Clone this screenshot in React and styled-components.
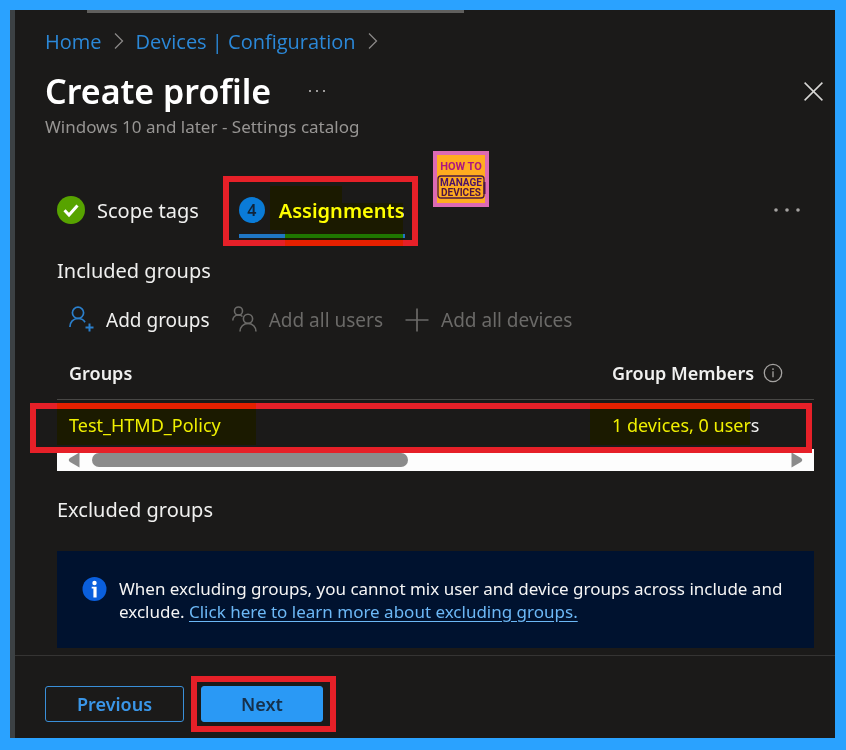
import React from "react";
import styled, { createGlobalStyle, css } from "styled-components";

const GlobalStyle = createGlobalStyle`
  *, *::before, *::after { box-sizing: border-box; }
  body { margin: 0; background: #2aa2ff; }
  button, a, table { font: inherit; color: inherit; }
  button { background: none; border: 0; padding: 0; margin: 0; cursor: pointer; }
  h1, h2, p { margin: 0; }
`;

const Frame = styled.div`
  min-height: 100vh;
  padding: 10px 11px 12px 10px;
  display: flex;
  background: #2aa2ff;
  font-family: "Noto Sans", "Open Sans", sans-serif;
  font-size: 18px;
  color: #f0f0ef;
`;

const Panel = styled.div`
  flex: 1;
  min-width: 0;
  display: flex;
  flex-direction: column;
  background: #1b1a19;
  border-left: 5px solid #3c4144;
`;

const LoadingBar = styled.div`
  height: 3px;
  width: 46%;
  margin-left: 72px;
  background: #605f5d;
`;

const Header = styled.header`
  padding: 14px 12px 0 30px;
`;

const Breadcrumb = styled.nav`
  display: flex;
  align-items: center;
  gap: 12px;
  height: 28px;
  font-family: "Open Sans", "Noto Sans", sans-serif;
  font-size: 20px;
  color: #2b88d8;
  a { text-decoration: none; }
`;

const TitleRow = styled.div`
  display: flex;
  align-items: center;
  height: 44px;
  margin-top: 14px;
`;

const Title = styled.h1`
  font-size: 34px;
  line-height: 44px;
  font-weight: 600;
  color: #fff;
`;

const IconButton = styled.button`
  display: flex;
  color: #d8d7d5;
  margin-left: ${(p) => (p.$push ? "auto" : "36px")};
`;

const Subtitle = styled.p`
  margin-top: 2px;
  font-size: 17px;
  line-height: 24px;
  color: #979593;
`;

const Content = styled.main`
  padding: 0 21px 0 42px;
`;

const Steps = styled.div`
  display: flex;
  align-items: center;
  gap: 40px;
  margin-top: 43px;
`;

const Step = styled.button`
  position: relative;
  display: flex;
  align-items: center;
  gap: ${(p) => (p.$active ? "14px" : "12px")};
  height: 56px;
  font-size: 20px;
  font-weight: ${(p) => (p.$active ? 600 : 400)};
  color: ${(p) => (p.$active ? "#fff" : "#f0f0ef")};
  ${(p) =>
    p.$active &&
    css`
      box-shadow: inset 0 -4px #1f76c4;
    `}
`;

const StepNumber = styled.span`
  width: 26px;
  height: 26px;
  border-radius: 50%;
  background: #0a7bd8;
  color: #10243a;
  font-size: 16px;
  line-height: 26px;
  text-align: center;
`;

const outlineAreas = {
  step: "inset: -6px -13px -8px -16px;",
  row: "inset: 2px 2px -4px -27px;",
  button: "inset: -11px -14px -11px -11px;",
};

const RedOutline = styled.span`
  position: absolute;
  z-index: 2;
  pointer-events: none;
  border: 6px solid #e62028;
  ${(p) => outlineAreas[p.$area]}
`;

const markerAreas = {
  stepTop: "left: 31px; width: 72px; top: 4px; height: 17px;",
  step: "left: 31px; right: 2px; top: 21px; bottom: 8px;",
  stepLine: "left: 46px; right: 2px; bottom: -8px; height: 16px;",
  group: "left: 0; width: 199px; top: 2px; bottom: 4px;",
  members: "right: 64px; width: 160px; top: 2px; bottom: 4px;",
};

const Marker = styled.span`
  position: absolute;
  z-index: 3;
  pointer-events: none;
  background: #ff0;
  mix-blend-mode: multiply;
  ${(p) => markerAreas[p.$area]}
`;

const StepSlot = styled.div`
  position: relative;
`;

const LogoBadge = styled.span`
  position: absolute;
  left: 194px;
  top: -31px;
  width: 56px;
  height: 56px;
  svg { display: block; }
`;

const SectionTitle = styled.h2`
  margin-top: ${(p) => (p.$later ? "25px" : "19px")};
  font-size: 20px;
  line-height: 28px;
  font-weight: 400;
`;

const Toolbar = styled.div`
  display: flex;
  align-items: center;
  gap: 22px;
  height: 36px;
  margin: 17px 0 0 12px;
`;

const Command = styled.button`
  display: flex;
  align-items: center;
  gap: 12px;
  font-size: 19px;
  color: #f0f0ef;
  &:disabled { color: #6b6a68; cursor: default; }
  svg { flex: none; }
`;

const TableWrap = styled.div`
  position: relative;
  margin-top: 8px;
`;

const GroupTable = styled.table`
  width: 100%;
  border-collapse: separate;
  border-spacing: 0;
  table-layout: fixed;
  text-align: left;
  th {
    height: 54px;
    padding: 0 12px;
    border-bottom: 1px solid #484745;
    font-weight: 600;
    white-space: nowrap;
  }
  th:last-child { width: 214px; }
  td { height: 49px; padding: 0 12px; white-space: nowrap; }
`;

const HeadLabel = styled.span`
  display: flex;
  align-items: center;
  gap: 9px;
`;

const RowOverlay = styled.div`
  position: absolute;
  inset: 55px 0 0 0;
  pointer-events: none;
`;

const ScrollBar = styled.div`
  display: flex;
  align-items: center;
  gap: 12px;
  height: 22px;
  padding: 0 11px;
  background: #fdfdfd;
  button { display: flex; }
`;

const ScrollTrack = styled.div`
  flex: 1;
  height: 14px;
`;

const ScrollThumb = styled.div`
  width: 46%;
  height: 14px;
  border-radius: 7px;
  background: #8b8b8b;
`;

const Notice = styled.div`
  display: flex;
  gap: 12px;
  margin-top: 27px;
  padding: 26px 24px 25px 25px;
  background: #00122f;
  line-height: 23px;
  font-size: 17px;
  color: #f5f5f5;
  svg { flex: none; }
  a { display: inline-block; color: #6cb8f6; text-underline-offset: 3px; }
`;

const Footer = styled.footer`
  flex: 1;
  display: flex;
  align-items: flex-start;
  gap: 17px;
  margin-top: 7px;
  padding: 30px 30px 16px;
  border-top: 1px solid #353433;
`;

const ActionButton = styled.button`
  position: relative;
  min-width: ${(p) => (p.$primary ? "122px" : "139px")};
  height: 36px;
  line-height: 32px;
  border-radius: 3px;
  border: 1px solid #3a8fd8;
  font-weight: 600;
  color: #3a96e8;
  ${(p) =>
    p.$primary &&
    css`
      background: #2a99f5;
      border-color: #2a99f5;
      color: #16304a;
    `}
`;

const Chevron = () => (
  <svg width="10" height="18" viewBox="0 0 10 18" fill="none" stroke="#8a8886" strokeWidth="1.3" aria-hidden="true">
    <path d="M1 1.5 8.5 9 1 16.5" />
  </svg>
);

const Dots = ({ width, gap, r, color }) => (
  <svg width={width} height="8" viewBox={`0 0 ${width} 8`} fill={color} aria-hidden="true">
    {[-1, 0, 1].map((n) => (
      <circle key={n} cx={width / 2 + n * gap} cy="4" r={r} />
    ))}
  </svg>
);

const CheckIcon = () => (
  <svg width="28" height="28" viewBox="0 0 28 28" aria-hidden="true">
    <circle cx="14" cy="14" r="14" fill="#57a300" />
    <path d="M7.5 14.3 12 19 20.5 9.5" fill="none" stroke="#fff" strokeWidth="3" />
  </svg>
);

const AddUserIcon = () => (
  <svg width="25" height="28" viewBox="0 0 25 28" fill="none" stroke="#2b7fcb" strokeWidth="1.7" aria-hidden="true">
    <circle cx="9" cy="6.8" r="5.6" />
    <path d="M.9 21C.9 15.8 4.3 12.5 9 12.5c3.2 0 5.6 1.3 7 3.7" />
    <path d="M20.5 17.5v8M16.5 21.5h8" strokeWidth="2" />
  </svg>
);

const UsersIcon = () => (
  <svg width="25" height="28" viewBox="0 0 25 28" fill="none" stroke="currentColor" strokeWidth="1.6" aria-hidden="true">
    <circle cx="6.5" cy="5" r="4" />
    <path d="M.8 14.5C.8 11.3 3.2 9 6.5 9c1.6 0 3 .6 4 1.5" />
    <circle cx="16" cy="12.8" r="4.6" />
    <path d="M8 25.5c0-4.7 3.5-8 8-8s8 3.3 8 8" />
  </svg>
);

const PlusIcon = () => (
  <svg width="24" height="24" viewBox="0 0 24 24" fill="none" stroke="currentColor" strokeWidth="1.7" aria-hidden="true">
    <path d="M12 .5v23M.5 12h23" />
  </svg>
);

const InfoOutline = () => (
  <svg width="20" height="20" viewBox="0 0 20 20" fill="none" stroke="#a5a3a1" strokeWidth="1.3" aria-hidden="true">
    <circle cx="10" cy="10" r="8.7" />
    <path d="M10 8.3v6M10 5.3v1.6" />
  </svg>
);

const InfoFilled = () => (
  <svg width="25" height="24" viewBox="0 0 25 24" aria-hidden="true">
    <circle cx="12.5" cy="12" r="12" fill="#0a5fdd" />
    <circle cx="12.5" cy="6" r="2.2" fill="#fff" />
    <path d="M9.7 9.7h4.9v10.9h-3.2v-9.2H9.7z" fill="#fff" />
  </svg>
);

const ArrowIcon = ({ right }) => (
  <svg width="12" height="16" viewBox="0 0 12 16" aria-hidden="true">
    <path
      d={right ? "M.5 .5 10 6Q12.5 8 10 10L.5 15.5Z" : "M11.5 .5 2 6Q-.5 8 2 10L11.5 15.5Z"}
      fill="#8b8b8b"
    />
  </svg>
);

const HowToLogo = () => (
  <svg width="56" height="56" viewBox="0 0 56 56" role="img" aria-label="How to manage devices">
    <rect width="56" height="56" fill="#dc6ab3" />
    <rect x="4" y="4" width="48" height="48" fill="#ffac20" />
    <g fontFamily="Roboto, sans-serif" fontWeight="700" textAnchor="middle">
      <text x="28" y="19" fontSize="11" fill="#ad1781">HOW TO</text>
      <rect x="5" y="25" width="46" height="22" rx="3" fill="none" stroke="#4a1742" strokeWidth="1.3" />
      <text x="28" y="35" fontSize="10" fill="#4b1269">MANAGE</text>
      <text x="28" y="45" fontSize="10" fill="#4b1245">DEVICES</text>
    </g>
    <path d="M51.5 31v12" stroke="#4a1742" strokeWidth="2" />
  </svg>
);

export default function App() {
  return (
    <>
      <GlobalStyle />
      <Frame>
        <Panel>
          <LoadingBar />
          <Header>
            <Breadcrumb aria-label="Breadcrumb">
              <a href="#home">Home</a>
              <Chevron />
              <a href="#devices">Devices | Configuration</a>
              <Chevron />
            </Breadcrumb>
            <TitleRow>
              <Title>Create profile</Title>
              <IconButton aria-label="More options">
                <Dots width={20} gap={7} r={1} color="#c8c6c4" />
              </IconButton>
              <IconButton $push aria-label="Close">
                <svg width="19" height="19" viewBox="0 0 19 19" stroke="currentColor" strokeWidth="1.5" aria-hidden="true">
                  <path d="M.6.6l17.8 17.8M18.4.6.6 18.4" />
                </svg>
              </IconButton>
            </TitleRow>
            <Subtitle>Windows 10 and later - Settings catalog</Subtitle>
          </Header>

          <Content>
            <Steps>
              <Step>
                <CheckIcon />
                Scope tags
              </Step>
              <StepSlot>
                <Step $active aria-current="step">
                  <StepNumber>4</StepNumber>
                  Assignments
                </Step>
                <RedOutline $area="step" />
                <Marker $area="stepTop" />
                <Marker $area="step" />
                <Marker $area="stepLine" />
                <LogoBadge>
                  <HowToLogo />
                </LogoBadge>
              </StepSlot>
              <IconButton $push aria-label="More steps">
                <Dots width={54} gap={11} r={1.8} color="#a5a3a1" />
              </IconButton>
            </Steps>

            <SectionTitle>Included groups</SectionTitle>
            <Toolbar>
              <Command>
                <AddUserIcon />
                Add groups
              </Command>
              <Command disabled>
                <UsersIcon />
                Add all users
              </Command>
              <Command disabled>
                <PlusIcon />
                Add all devices
              </Command>
            </Toolbar>

            <TableWrap>
              <GroupTable>
                <thead>
                  <tr>
                    <th>Groups</th>
                    <th>
                      <HeadLabel>
                        Group Members <InfoOutline />
                      </HeadLabel>
                    </th>
                  </tr>
                </thead>
                <tbody>
                  <tr>
                    <td>Test_HTMD_Policy</td>
                    <td>1 devices, 0 users</td>
                  </tr>
                </tbody>
              </GroupTable>
              <RowOverlay>
                <RedOutline $area="row" />
                <Marker $area="group" />
                <Marker $area="members" />
              </RowOverlay>
            </TableWrap>
            <ScrollBar>
              <button aria-label="Scroll left">
                <ArrowIcon />
              </button>
              <ScrollTrack>
                <ScrollThumb />
              </ScrollTrack>
              <button aria-label="Scroll right">
                <ArrowIcon right />
              </button>
            </ScrollBar>

            <SectionTitle $later>Excluded groups</SectionTitle>
            <Notice>
              <InfoFilled />
              <p>
                When excluding groups, you cannot mix user and device groups across include and exclude.{" "}
                <a href="#learn">Click here to learn more about excluding groups.</a>
              </p>
            </Notice>
          </Content>

          <Footer>
            <ActionButton>Previous</ActionButton>
            <ActionButton $primary>
              Next
              <RedOutline $area="button" />
            </ActionButton>
          </Footer>
        </Panel>
      </Frame>
    </>
  );
}
